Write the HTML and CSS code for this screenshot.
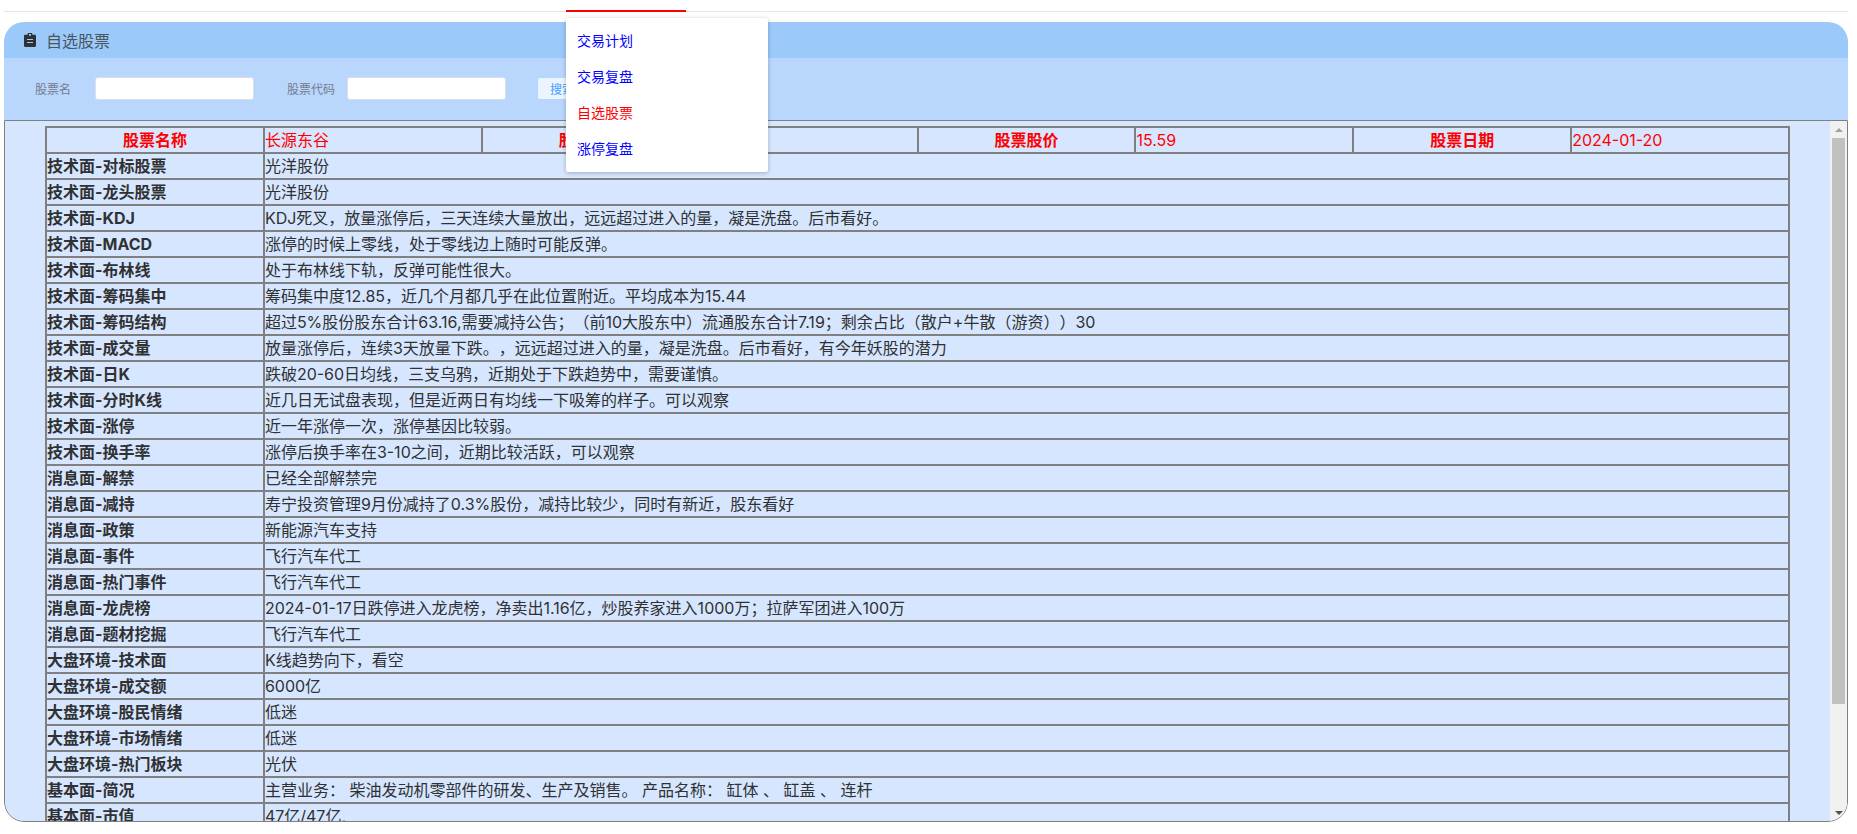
FILE: index.html
```html
<!DOCTYPE html>
<html>
<head>
    <meta charset="utf-8">
    <title>自选股票</title>
    <link rel="stylesheet" href="styles.css">
</head>
<body>
    <div class="top-nav"><span class="nav-active"></span></div>

    <!-- dropdown of the active nav item -->
    <ul class="nav-menu">
        <li>交易计划</li>
        <li>交易复盘</li>
        <li class="current">自选股票</li>
        <li>涨停复盘</li>
    </ul>

    <div class="card">
        <div class="card-header">
            <svg class="card-icon" viewBox="0 0 12 14"><path fill="#303133" fill-rule="evenodd" d="M1.2 1.8H3.6V1.2C3.6.6 4.1 0 4.8 0H7.2C7.900 0 8.400.6 8.400 1.200V1.800H10.800C11.500 1.800 12 2.300 12 3V12.800C12 13.500 11.500 14 10.800 14H1.200C.5 14 0 13.500 0 12.800V3C0 2.300.5 1.800 1.200 1.800ZM5 1.100V2.800H7V1.100ZM3 6V7.100H9V6ZM3 9V10.100H9V9Z"/></svg>
            <span>自选股票</span>
        </div>
        <form class="search-bar">
            <label class="search-label">股票名</label>
            <input class="search-input" type="text">
            <label class="search-label label-code">股票代码</label>
            <input class="search-input" type="text">
            <button class="search-btn" type="button">搜索</button>
        </form>
        <div class="content">
            <div class="table-wrap">
                <table class="stock-table">
                    <colgroup>
                        <col><col><col><col><col><col><col><col>
                    </colgroup>
                    <tr class="head-row">
                        <th class="center">股票名称</th><td>长源东谷</td>
                        <th class="center">股票代码</th><td>603950</td>
                        <th class="center">股票股价</th><td>15.59</td>
                        <th class="center">股票日期</th><td>2024-01-20</td>
                    </tr>
                    <tr><th>技术面-对标股票</th><td colspan="7">光洋股份</td></tr>
                    <tr><th>技术面-龙头股票</th><td colspan="7">光洋股份</td></tr>
                    <tr><th>技术面-KDJ</th><td colspan="7">KDJ死叉，放量涨停后，三天连续大量放出，远远超过进入的量，凝是洗盘。后市看好。</td></tr>
                    <tr><th>技术面-MACD</th><td colspan="7">涨停的时候上零线，处于零线边上随时可能反弹。</td></tr>
                    <tr><th>技术面-布林线</th><td colspan="7">处于布林线下轨，反弹可能性很大。</td></tr>
                    <tr><th>技术面-筹码集中</th><td colspan="7">筹码集中度12.85，近几个月都几乎在此位置附近。平均成本为15.44</td></tr>
                    <tr><th>技术面-筹码结构</th><td colspan="7">超过5%股份股东合计63.16,需要减持公告；（前10大股东中）流通股东合计7.19；剩余占比（散户+牛散（游资））30</td></tr>
                    <tr><th>技术面-成交量</th><td colspan="7">放量涨停后，连续3天放量下跌。，远远超过进入的量，凝是洗盘。后市看好，有今年妖股的潜力</td></tr>
                    <tr><th>技术面-日K</th><td colspan="7">跌破20-60日均线，三支乌鸦，近期处于下跌趋势中，需要谨慎。</td></tr>
                    <tr><th>技术面-分时K线</th><td colspan="7">近几日无试盘表现，但是近两日有均线一下吸筹的样子。可以观察</td></tr>
                    <tr><th>技术面-涨停</th><td colspan="7">近一年涨停一次，涨停基因比较弱。</td></tr>
                    <tr><th>技术面-换手率</th><td colspan="7">涨停后换手率在3-10之间，近期比较活跃，可以观察</td></tr>
                    <tr><th>消息面-解禁</th><td colspan="7">已经全部解禁完</td></tr>
                    <tr><th>消息面-减持</th><td colspan="7">寿宁投资管理9月份减持了0.3%股份，减持比较少，同时有新近，股东看好</td></tr>
                    <tr><th>消息面-政策</th><td colspan="7">新能源汽车支持</td></tr>
                    <tr><th>消息面-事件</th><td colspan="7">飞行汽车代工</td></tr>
                    <tr><th>消息面-热门事件</th><td colspan="7">飞行汽车代工</td></tr>
                    <tr><th>消息面-龙虎榜</th><td colspan="7">2024-01-17日跌停进入龙虎榜，净卖出1.16亿，炒股养家进入1000万；拉萨军团进入100万</td></tr>
                    <tr><th>消息面-题材挖掘</th><td colspan="7">飞行汽车代工</td></tr>
                    <tr><th>大盘环境-技术面</th><td colspan="7">K线趋势向下，看空</td></tr>
                    <tr><th>大盘环境-成交额</th><td colspan="7">6000亿</td></tr>
                    <tr><th>大盘环境-股民情绪</th><td colspan="7">低迷</td></tr>
                    <tr><th>大盘环境-市场情绪</th><td colspan="7">低迷</td></tr>
                    <tr><th>大盘环境-热门板块</th><td colspan="7">光伏</td></tr>
                    <tr><th>基本面-简况</th><td colspan="7">主营业务： 柴油发动机零部件的研发、生产及销售。 产品名称： 缸体 、 缸盖 、 连杆</td></tr>
                    <tr><th>基本面-市值</th><td colspan="7">47亿/47亿,</td></tr>
                </table>
            </div>
            <div class="scrollbar">
                <span class="arrow arrow-up"></span>
                <div class="track"><div class="thumb"></div></div>
                <span class="arrow arrow-down"></span>
            </div>
        </div>
    </div>
</body>
</html>
```

FILE: styles.css
```css
body {
    margin: 0;
    height: 834px;
    overflow: hidden;
    background: #fff;
    font-family: Inter, "Noto Sans CJK SC", sans-serif;
    color: #303133;
    text-spacing-trim: space-all;
}
.top-nav {
    height: 11px;
    margin: 0 9px 0 4px;
    border-bottom: 1px solid #e6e6e6;
    position: relative;
}
.nav-active {
    position: absolute;
    left: 562px;
    bottom: -1px;
    width: 120px;
    height: 2px;
    background: #f00;
}
.nav-menu {
    position: absolute;
    left: 566px;
    top: 18px;
    width: 202px;
    height: 154px;
    margin: 0;
    padding: 5px 0;
    box-sizing: border-box;
    list-style: none;
    background: #fff;
    border-radius: 2px;
    box-shadow: 0 1px 4px rgba(0, 0, 0, 0.25);
    z-index: 5;
}
.nav-menu li {
    height: 36px;
    line-height: 36px;
    padding-left: 11px;
    font-size: 14px;
    color: #00f;
}
.nav-menu li.current {
    color: #f00;
}
.card {
    width: 1844px;
    height: 800px;
    margin: 10px 0 0 4px;
    border-radius: 20px;
    overflow: hidden;
    display: flex;
    flex-direction: column;
}
.card-header {
    height: 35px;
    flex: none;
    display: flex;
    align-items: center;
    gap: 10px;
    padding: 0 0 1px 20px;
    background: #9bc9fa;
    font-size: 16px;
    color: #4a5560;
}
.card-icon {
    width: 12px;
    height: 14px;
}
.search-bar {
    height: 62px;
    flex: none;
    box-sizing: border-box;
    display: flex;
    align-items: center;
    padding: 0 0 2px 31px;
    background: #b9d6fd;
}
.search-label {
    font-size: 12px;
    color: #757d8a;
    margin-right: 24px;
}
.label-code {
    margin-left: 33px;
    margin-right: 12px;
}
.search-input {
    width: 159px;
    height: 23px;
    box-sizing: border-box;
    border: 1px solid #dcdfe6;
    border-radius: 3px;
    background: #fff;
    padding: 0 8px;
}
.search-btn {
    width: 50px;
    height: 23px;
    margin-left: 31px;
    padding: 0;
    font-family: inherit;
    font-size: 12px;
    color: #409eff;
    background: #ecf5ff;
    border: 1px solid #b3d8ff;
    border-radius: 3px;
}
.content {
    flex: 1;
    min-height: 0;
    display: flex;
    background: #d6e6fe;
    border: 1px solid #808080;
    border-bottom-left-radius: 20px;
    border-bottom-right-radius: 20px;
    overflow: hidden;
}
.table-wrap {
    flex: 1;
    min-width: 0;
    overflow: hidden;
    padding: 5px 0 0 40px;
}
.stock-table {
    width: 1745px;
    table-layout: fixed;
    border-collapse: collapse;
    font-size: 16px;
    line-height: 24px;
}
.stock-table th, .stock-table td {
    height: 24px;
    padding: 0;
    border: 2px solid #808080;
    text-align: left;
    white-space: nowrap;
    overflow: hidden;
}
.stock-table th {
    font-weight: 700;
}
.stock-table th.center {
    text-align: center;
}
.head-row th, .head-row td {
    color: #f00;
}
.scrollbar {
    width: 17px;
    flex: none;
    display: flex;
    flex-direction: column;
    background: #f1f1f1;
}
.arrow {
    height: 17px;
    flex: none;
    display: flex;
    align-items: center;
    justify-content: center;
}
.arrow::before {
    content: "";
    border-left: 4px solid transparent;
    border-right: 4px solid transparent;
}
.arrow-up::before {
    border-bottom: 4px solid #a3a3a3;
}
.arrow-down::before {
    border-top: 4px solid #505050;
}
.track {
    flex: 1;
    padding: 0 2px;
}
.thumb {
    height: 566px;
    background: #c1c1c1;
}
```
